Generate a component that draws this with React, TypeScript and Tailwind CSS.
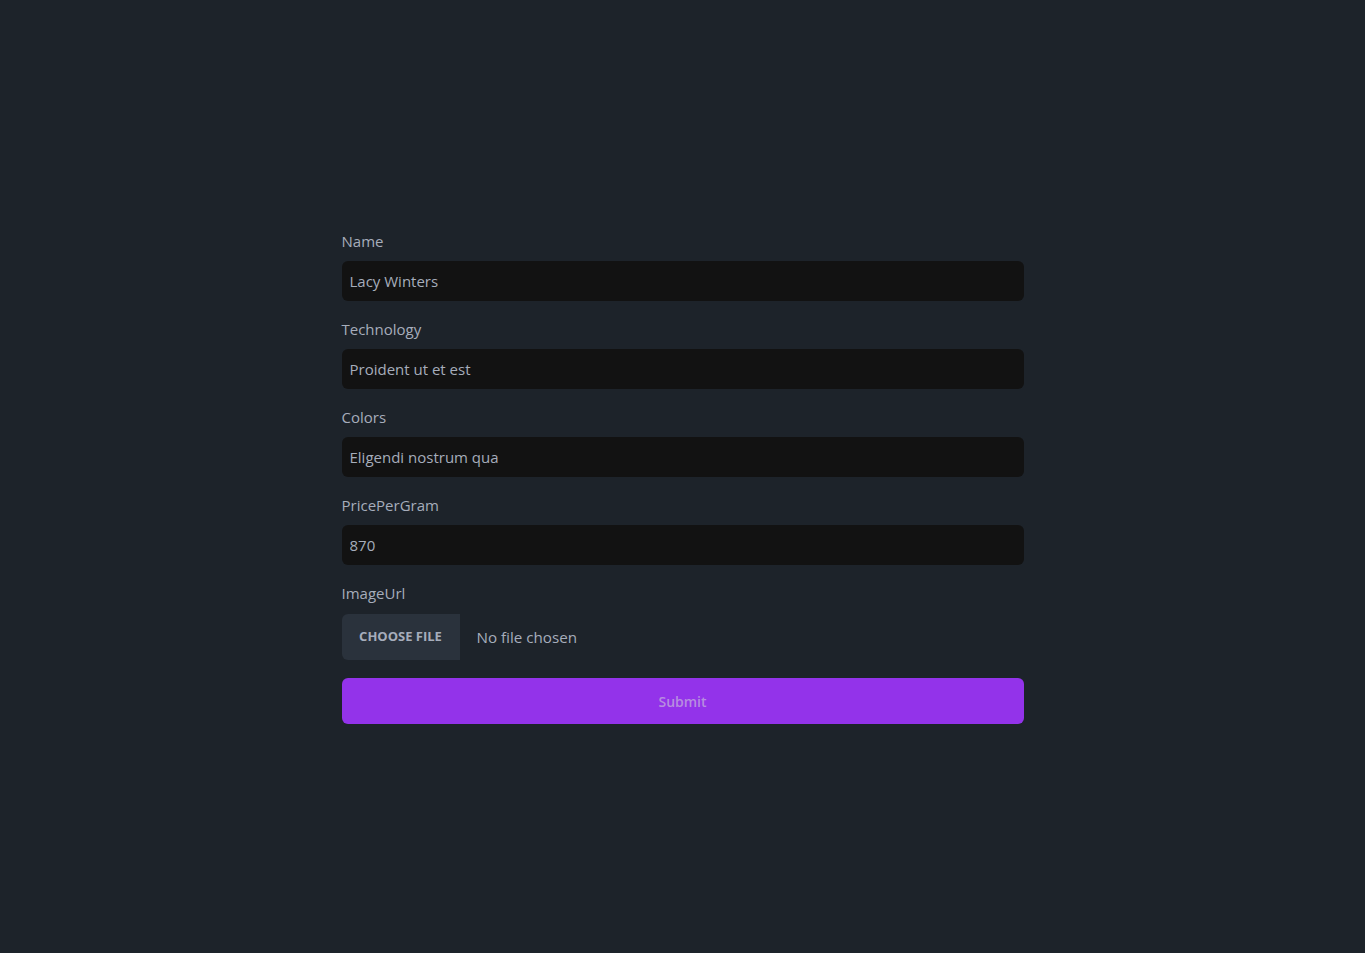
import React from "react";

const fields = [
  { label: "Name", value: "Lacy Winters" },
  { label: "Technology", value: "Proident ut et est" },
  { label: "Colors", value: "Eligendi nostrum qua" },
  { label: "PricePerGram", value: "870" },
];

export default function App() {
  return (
    <div
      className="min-h-screen w-full bg-[#1d232a] flex justify-center pt-[229px]"
      style={{ fontFamily: '"Open Sans", "Noto Sans", sans-serif' }}
    >
      <form className="w-[682px] flex flex-col gap-4" onSubmit={(e) => e.preventDefault()}>
        {fields.map((f) => (
          <div key={f.label} className="flex flex-col gap-2">
            <label className="text-[15px] leading-6 text-[#a6adbb]">{f.label}</label>
            <input
              defaultValue={f.value}
              className="h-10 w-full rounded-md bg-[#121212] px-2 text-[15px] text-[#a6adbb] outline-none"
            />
          </div>
        ))}
        <div className="flex flex-col gap-[9px]">
          <label className="text-[15px] leading-6 text-[#a6adbb]">ImageUrl</label>
          <div className="flex items-center h-[46px]">
            <span className="h-full w-[118px] flex items-center justify-center rounded-l-md bg-[#2a323c] text-[13px] font-bold uppercase text-[#a6adbb]">
              Choose file
            </span>
            <span className="ml-[17px] text-[15.2px] text-[#a6adbb]">No file chosen</span>
          </div>
        </div>
        <button
          type="submit"
          className="mt-[2px] h-[46px] w-full rounded-md bg-[#9333ea] text-[14px] font-semibold text-[#b78de0]"
        >
          Submit
        </button>
      </form>
    </div>
  );
}
